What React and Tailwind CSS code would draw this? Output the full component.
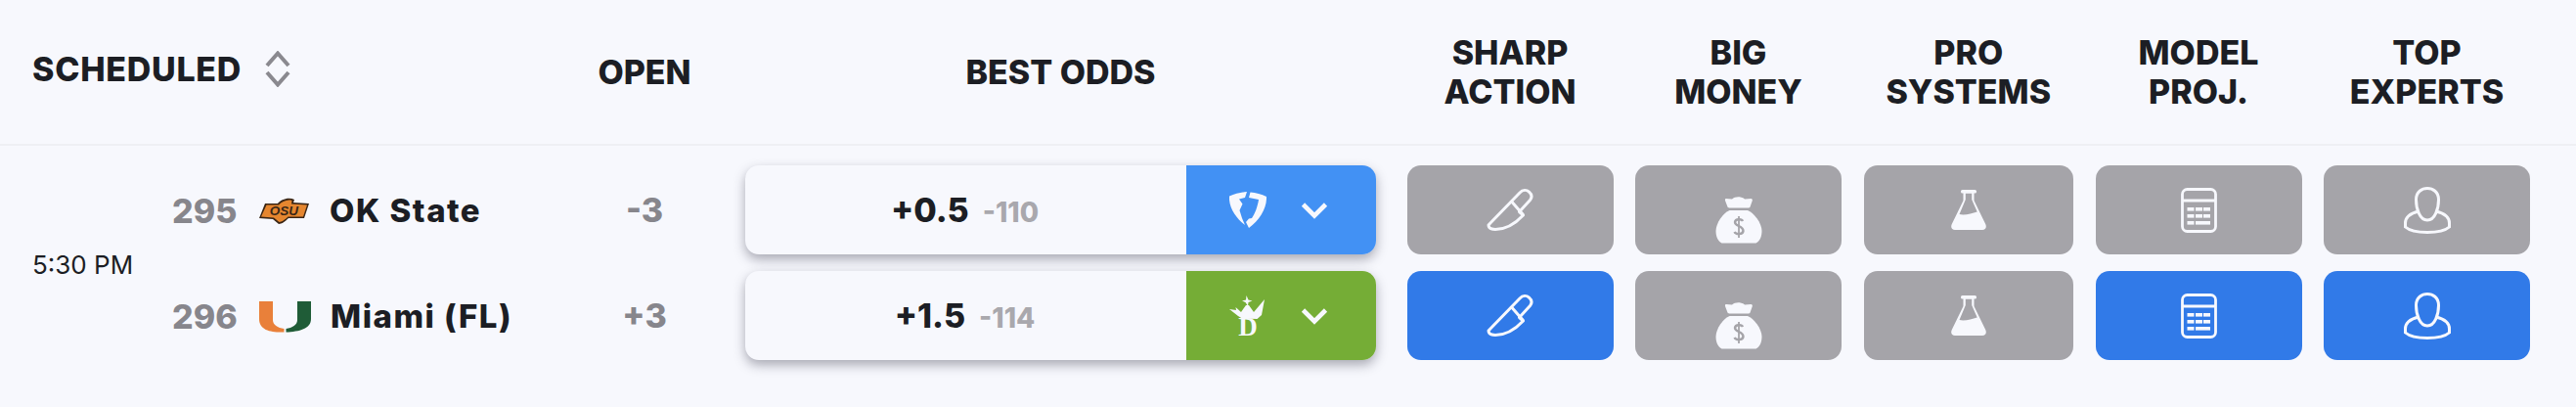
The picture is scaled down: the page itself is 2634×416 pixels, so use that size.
const FONT = "font-['Inter','Liberation_Sans',sans-serif]";

function Chevron() {
  return (
    <svg width="28" height="18" viewBox="0 0 28 18" fill="none" className="shrink-0">
      <path d="M2.5 3 L14 14.5 L25.5 3" stroke="#f7f8fd" strokeWidth="4.6" />
    </svg>
  );
}

function SortIcon() {
  return (
    <svg width="26" height="37" viewBox="0 0 26 37" fill="none" className="shrink-0">
      <path d="M2 15 L13 2.5 L24 15" stroke="#8a898f" strokeWidth="4" />
      <path d="M2 22 L13 34.5 L24 22" stroke="#8a898f" strokeWidth="4" />
    </svg>
  );
}

function Knife() {
  return (
    <svg width="50" height="44" viewBox="0 0 50 44" fill="none" stroke="#f7f8fd" strokeWidth="3" strokeLinejoin="round" strokeLinecap="round">
      <path d="M3 37 L35 4 C38 .8 42 1 44.5 3.2 C47.5 5.8 47.5 9 45.5 11.5 L34.5 23.5 L38.5 27 C30 36 20 41.5 10 41.5 C6 41.5 3 40 3 37 Z" />
      <path d="M27.5 14 L38 26" />
    </svg>
  );
}

function Bag({ bg }) {
  return (
    <svg width="48" height="49" viewBox="0 0 48 49">
      <path fill="#f7f8fd" d="M11 3 L17 3.6 C20 .5 27 .5 30 3.6 L36.5 3 C37.5 3 38 4 37.8 5 L35.5 11.5 C35.3 12 35 12.4 34 12.4 L14 12.4 C13 12.4 12.7 12 12.5 11.5 L10 5 C9.8 4 10 3 11 3 Z" />
      <path fill="#f7f8fd" d="M14.5 15 L33 15 C39 17 47.5 28 47.5 36 C47.5 41 46 46 41.5 48.5 L6.5 48.5 C2 46 .5 41 .5 36 C.5 28 8.5 17 14.5 15 Z" />
      <path fill="none" stroke={bg} strokeWidth="2.4" d="M28 26 C27 23.5 20.5 23.5 20 27 C20 31.5 28.5 30.5 28.5 36 C28 40 21 40 19.5 37" />
      <path fill="none" stroke={bg} strokeWidth="1.8" d="M24 21 L24 43" />
    </svg>
  );
}

function Flask() {
  return (
    <svg width="36" height="41" viewBox="0 0 36 41">
      <rect x="10" y="0" width="16" height="3.6" rx="1.6" fill="#f7f8fd" />
      <path
        fill="#f7f8fd"
        fillRule="evenodd"
        d="M12.5 3 L12.5 11 L.8 35 C-.8 38.5 1 41 4 41 L32 41 C35 41 36.8 38.5 35.2 35 L23.5 11 L23.5 3 Z M14.8 3.6 L21.2 3.6 L21.2 10 L26.7 22.5 C21 24 14 26.5 8.5 25 L14.8 10 Z"
      />
    </svg>
  );
}

function Calculator() {
  return (
    <svg width="37" height="46" viewBox="0 0 37 46" fill="none">
      <rect x="1.5" y="1.5" width="34" height="43" rx="5" stroke="#f7f8fd" strokeWidth="2.8" />
      <path d="M2 13 H35" stroke="#f7f8fd" strokeWidth="2.8" />
      <g fill="#f7f8fd">
        <rect x="6.5" y="20" width="7" height="3.6" />
        <rect x="15" y="20" width="7" height="3.6" />
        <rect x="23" y="20" width="7" height="3.6" />
        <rect x="6.5" y="27" width="7" height="3.6" />
        <rect x="15" y="27" width="7" height="3.6" />
        <rect x="23" y="27" width="7" height="3.6" />
        <rect x="6.5" y="34" width="7" height="3.6" />
        <rect x="15" y="34" width="15" height="3.6" />
      </g>
    </svg>
  );
}

function Person() {
  return (
    <svg width="48" height="48" viewBox="0 0 48 48" fill="none" stroke="#f7f8fd" strokeWidth="3">
      <path d="M24 1.5 C18.5 1.5 12.5 5 12.5 13 C12.5 22 16 34 24 34 C32 34 35.5 22 35.5 13 C35.5 5 29.5 1.5 24 1.5 Z" />
      <path d="M15 25 C7 27 1.5 31 1.5 37 L1.5 41 C6 45 14 46.5 24 46.5 C34 46.5 42 45 46.5 41 L46.5 37 C46.5 31 41 27 33 25" />
    </svg>
  );
}

function FanDuel() {
  return (
    <svg width="38" height="37" viewBox="0 0 38 37" className="shrink-0">
      <path fill="#f7f8fd" d="M0 4.5 C6 2 12 .5 18 0 L16 6 L10 7.5 L13.5 12.5 L10.5 19 L13 27 L16 34 C8 28 -1 17 0 4.5 Z" />
      <path fill="#f7f8fd" d="M21.5 .5 C27 1 33 2.5 38 5 C38.5 17 31 29 20 37 L17 31 L20 27.5 L23 27 C26 23 29 15 30 8 L20 6 Z" />
    </svg>
  );
}

function DraftKings() {
  return (
    <svg width="38" height="42" viewBox="0 0 38 42" className="shrink-0">
      <path fill="#f7f8fd" d="M17.5 0 L19.5 4.5 L23.5 5.5 L19.5 7 L19 11 L16.5 7 L13 5.5 L17 4.5 Z" />
      <path fill="#f7f8fd" d="M0 14 L7 15 L6.5 12 L12 17 L17 10 L20 10 L25 17 L36 4 L33 20 L28.5 24 L13 23.5 L9 21 Z" />
      <text x="19" y="41" textAnchor="middle" fontFamily="'Liberation Serif',serif" fontWeight="700" fontSize="27" fill="#f7f8fd">D</text>
    </svg>
  );
}

function OsuLogo() {
  return (
    <svg width="51" height="27" viewBox="0 0 51 27" className="shrink-0">
      <path fill="#3a2616" d="M6 6 L19 6 C22 2 30 -1 36 2 L35 5 L51 6 L46 21 L30 21 C27 24 23 27 20 27 L14 22 L0 21 Z" />
      <path fill="#e5862f" d="M7.5 7.5 L20 7.5 C23 4 29 1.5 33.5 3 L33 6.5 L49 7.5 L45 19.5 L29.5 19.5 C27 22 23 25 20.5 25 L15 20.5 L2 19.5 Z" />
      <text x="25.5" y="18" textAnchor="middle" fontFamily="'Liberation Sans',sans-serif" fontWeight="700" fontStyle="italic" fontSize="13.5" fill="#3a2616">OSU</text>
    </svg>
  );
}

function MiamiLogo() {
  return (
    <svg width="53" height="32" viewBox="0 0 53 32" className="shrink-0">
      <path fill="#e9803a" d="M0 0 H14 V19 C14 24 19 27 25.5 28 V31.5 C13 32 0 30 0 18 Z" />
      <path fill="#1f5c37" d="M39 0 H53 V18 C53 28 41 31 27.5 31.5 V28 C34 27 39 24 39 19 Z" />
    </svg>
  );
}

function Signal({ active, children }) {
  return (
    <div className={`flex h-[91px] items-center justify-center rounded-[14px] ${active ? "bg-[#317ae8]" : "bg-[#a5a4a9]"}`}>
      {children}
    </div>
  );
}

function HeaderCell({ children }) {
  return (
    <div className="text-center text-[34px] font-extrabold leading-[40px] text-[#1c1e24]">{children}</div>
  );
}

function Team({ num, logo, name, nameClass }) {
  return (
    <div className="flex h-[91px] items-center pt-[2px]">
      <span className="w-[89px] shrink-0 text-[34px] font-extrabold text-[#87868c]">{num}</span>
      {logo}
      <span className={`text-[33px] font-extrabold tracking-[1.5px] text-[#1c1e24] ${nameClass}`}>{name}</span>
    </div>
  );
}

function OddsCard({ line, price, book, bg }) {
  return (
    <div className="flex h-[91px] w-[645px] rounded-[14px] bg-[#f7f8fd] shadow-[0_5px_12px_rgba(50,50,70,0.4)]">
      <div className="flex flex-1 items-baseline justify-center gap-[14px] pr-[2px] pt-[25px]">
        <span className="text-[34px] font-extrabold leading-[41px] text-[#1c1e24]">{line}</span>
        <span className="text-[28px] font-extrabold leading-[33px] text-[#a9a8ad]">{price}</span>
      </div>
      <div className={`flex w-[194px] items-center gap-[35px] rounded-r-[14px] pl-[44px] ${bg}`}>
        {book}
        <Chevron />
      </div>
    </div>
  );
}

const COLS = "grid grid-cols-[211px_211px_214.5px_211px_211px] gap-x-[22.5px]";

export default function App() {
  return (
    <div className={`h-[416px] w-[2634px] bg-[#f7f8fd] ${FONT}`}>
      <div className="flex h-[149px] items-center border-b-2 border-[#eff0f4] pl-[33px]">
        <div className="flex w-[557px] items-center gap-[24px] pb-[6px]">
          <span className="text-[34px] font-extrabold tracking-[0.7px] text-[#1c1e24]">SCHEDULED</span>
          <SortIcon />
        </div>
        <div className="w-[138px] text-center text-[34px] font-extrabold text-[#1c1e24]">OPEN</div>
        <div className="ml-[34px] w-[645px] text-center text-[34px] font-extrabold text-[#1c1e24]">BEST ODDS</div>
        <div className={`ml-[31.5px] ${COLS}`}>
          <HeaderCell>SHARP<br />ACTION</HeaderCell>
          <HeaderCell>BIG<br />MONEY</HeaderCell>
          <HeaderCell>PRO<br />SYSTEMS</HeaderCell>
          <HeaderCell>MODEL<br />PROJ.</HeaderCell>
          <HeaderCell>TOP<br />EXPERTS</HeaderCell>
        </div>
      </div>

      <div className="flex pl-[33px] pt-[20px]">
        <div className="flex w-[143px] items-center pt-[4px] text-[26px] text-[#1c1e24]">5:30 PM</div>
        <div className="flex w-[414px] flex-col gap-[17px]">
          <Team num="295" logo={<OsuLogo />} name="OK State" nameClass="ml-[21px]" />
          <Team num="296" logo={<MiamiLogo />} name="Miami (FL)" nameClass="ml-[20px]" />
        </div>
        <div className="flex w-[138px] flex-col gap-[17px] text-center text-[34px] font-extrabold text-[#87868c]">
          <div className="flex h-[91px] items-center justify-center">-3</div>
          <div className="flex h-[91px] items-center justify-center">+3</div>
        </div>
        <div className="ml-[34px] flex flex-col gap-[17px]">
          <OddsCard line="+0.5" price="-110" book={<FanDuel />} bg="bg-[#4291f4]" />
          <OddsCard line="+1.5" price="-114" book={<DraftKings />} bg="bg-[#75ad36]" />
        </div>
        <div className={`ml-[31.5px] gap-y-[17px] ${COLS}`}>
          <Signal><Knife /></Signal>
          <Signal><div className="pt-[20px]"><Bag bg="#a5a4a9" /></div></Signal>
          <Signal><Flask /></Signal>
          <Signal><Calculator /></Signal>
          <Signal><Person /></Signal>
          <Signal active><Knife /></Signal>
          <Signal><div className="pt-[20px]"><Bag bg="#a5a4a9" /></div></Signal>
          <Signal><Flask /></Signal>
          <Signal active><Calculator /></Signal>
          <Signal active><Person /></Signal>
        </div>
      </div>
    </div>
  );
}
